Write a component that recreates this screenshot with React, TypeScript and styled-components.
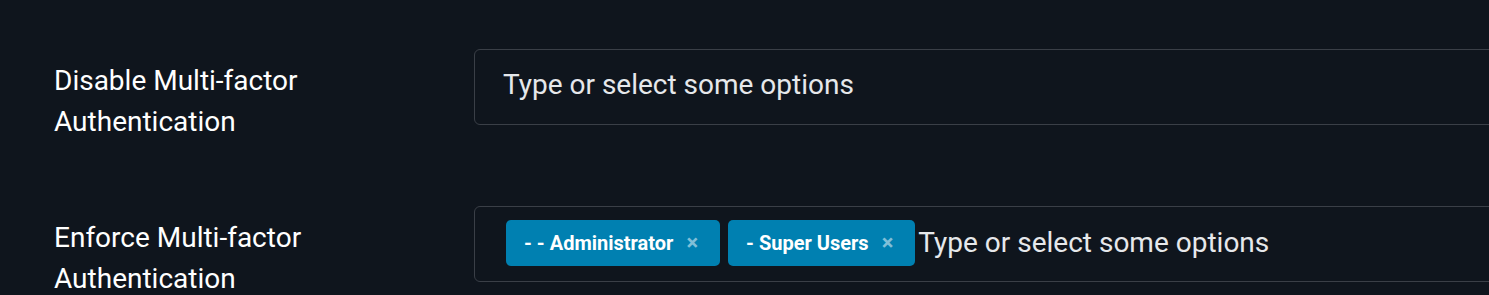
import React from "react";
import styled, { createGlobalStyle } from "styled-components";

const Global = createGlobalStyle`
  html, body {
    margin: 0;
    padding: 0;
    background: #0f151d;
    overflow: hidden;
  }
  body {
    font-family: Roboto, "Noto Sans", sans-serif;
    color: #ffffff;
  }
`;

const Page = styled.div`
  box-sizing: border-box;
  display: flex;
  flex-direction: column;
  gap: 81px;
  padding: 49px 0 0 54px;
  width: 2000px;
  min-height: 295px;
`;

const Row = styled.div`
  display: grid;
  grid-template-columns: 420px 1100px;
  align-items: start;
  height: 76px;
`;

const Label = styled.div`
  font-size: 28px;
  line-height: 41px;
  color: #ffffff;
  padding-top: 11px;
`;

const Field = styled.div<{ $tags?: boolean }>`
  box-sizing: border-box;
  height: 76px;
  border: 1px solid #3a3f47;
  border-radius: 6px;
  display: flex;
  align-items: center;
  gap: 8px;
  padding: 0 0 2px ${(p) => (p.$tags ? "31px" : "28px")};
`;

const Placeholder = styled.span<{ $after?: boolean }>`
  font-size: 28px;
  color: #e6e8eb;
  margin: 0 0 ${(p) => (p.$after ? "2px" : "4px")} ${(p) => (p.$after ? "-5px" : "0")};
  white-space: nowrap;
`;

const Tag = styled.span`
  display: inline-flex;
  align-items: center;
  height: 46px;
  box-sizing: border-box;
  padding: 0 22px 0 18px;
  background: #0080b1;
  border-radius: 5px;
  font-size: 20px;
  font-weight: 700;
  color: #ffffff;
  gap: 13px;
  white-space: nowrap;
`;

const Remove = styled.span`
  font-size: 22px;
  font-weight: 700;
  color: #80bfd8;
  line-height: 1;
`;

export default function App() {
  return (
    <>
      <Global />
      <Page>
        <Row>
          <Label>
            Disable Multi-factor
            <br />
            Authentication
          </Label>
          <Field>
            <Placeholder>Type or select some options</Placeholder>
          </Field>
        </Row>
        <Row>
          <Label>
            Enforce Multi-factor
            <br />
            Authentication
          </Label>
          <Field $tags>
            <Tag>
              - - Administrator<Remove>×</Remove>
            </Tag>
            <Tag>
              - Super Users<Remove>×</Remove>
            </Tag>
            <Placeholder $after>Type or select some options</Placeholder>
          </Field>
        </Row>
      </Page>
    </>
  );
}
